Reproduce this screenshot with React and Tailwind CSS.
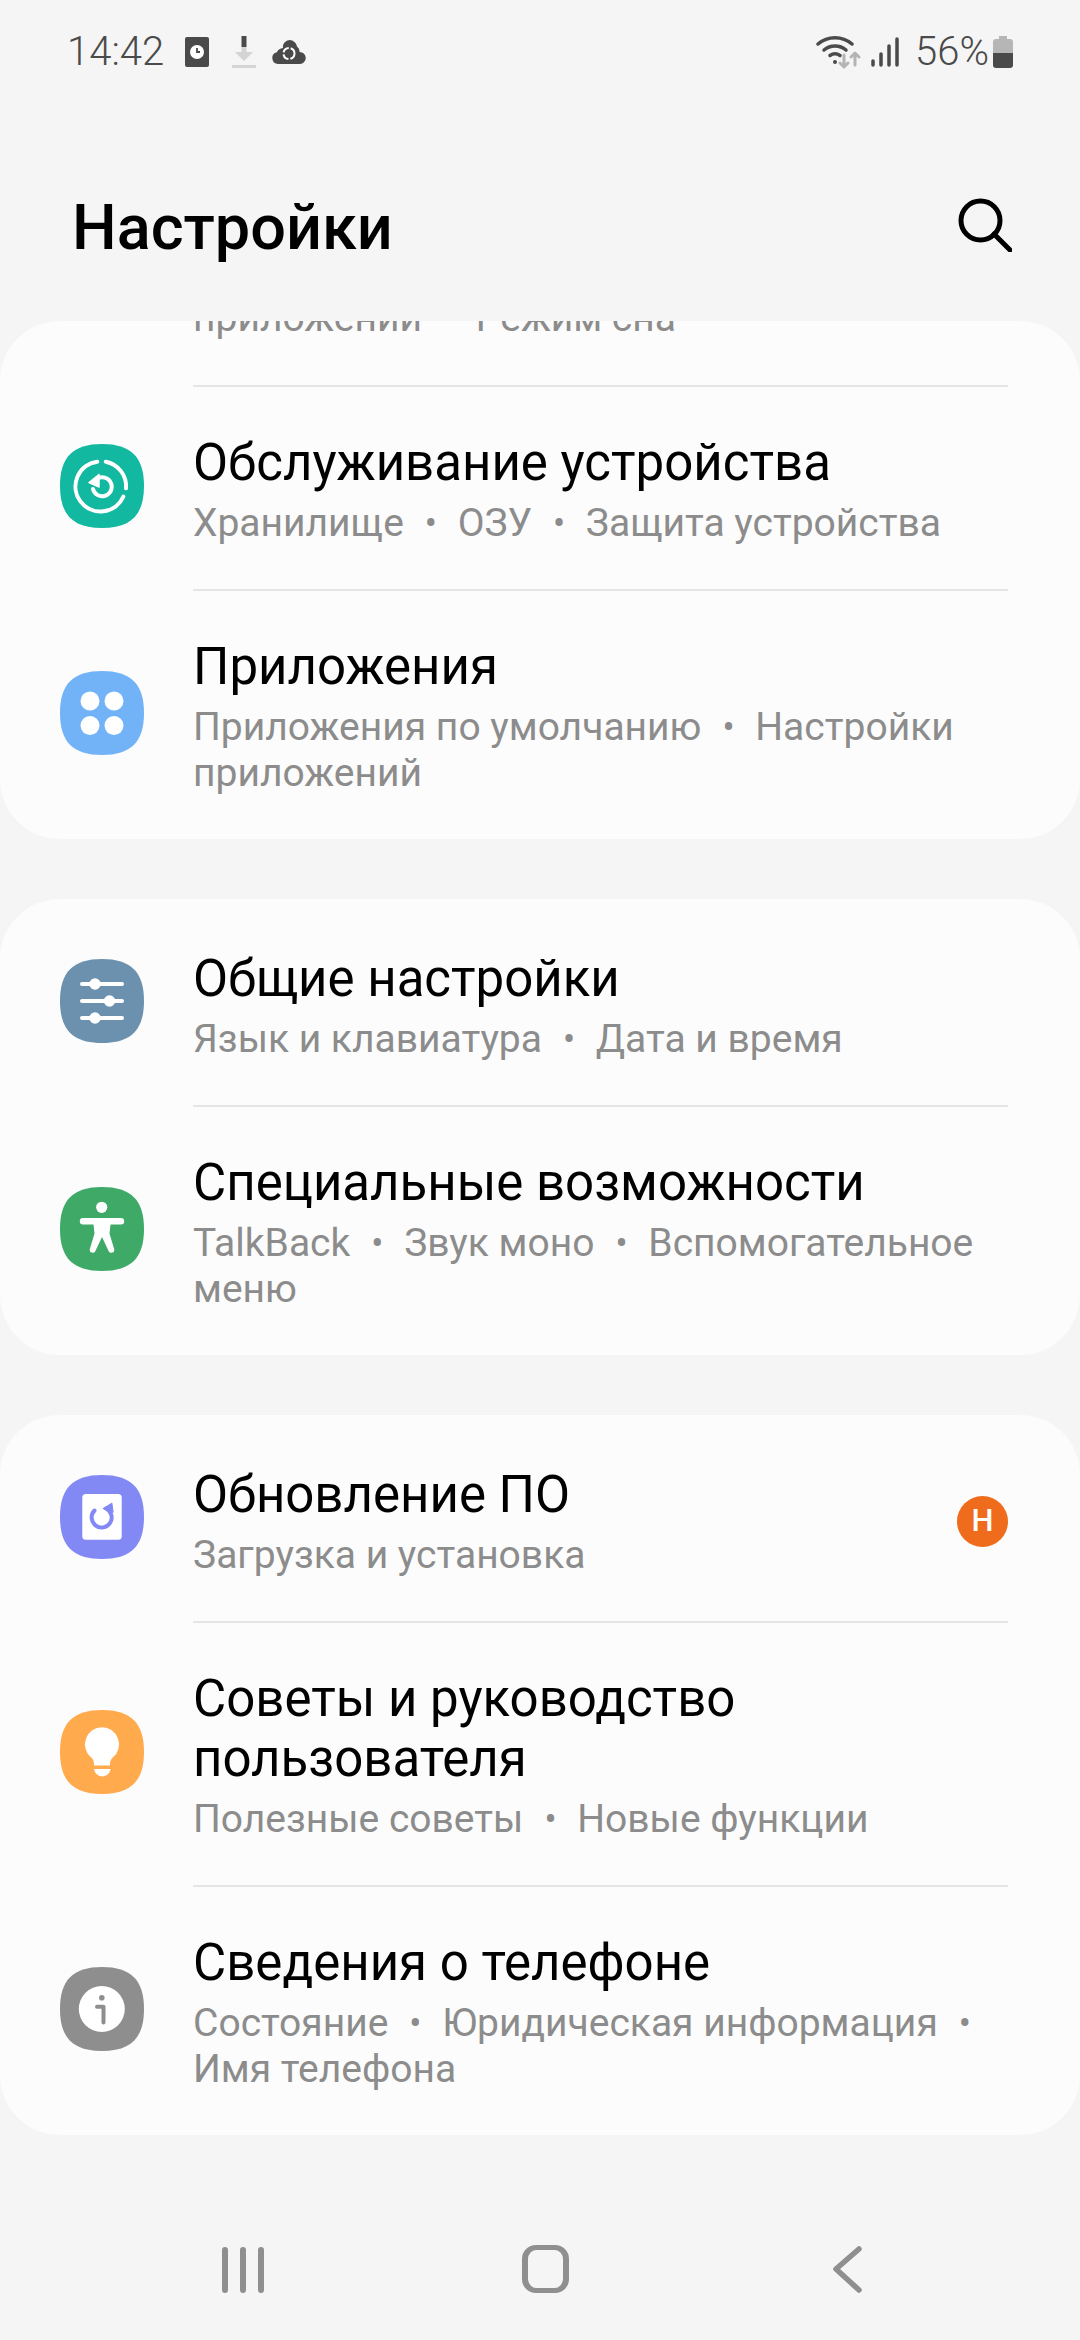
import React from "react";

const SQUIRCLE = "M42 0C71 0 84 13 84 42S71 84 42 84 0 71 0 42 13 0 42 0Z";

function AppIcon({ color, children }) {
	return (
		<svg width="84" height="84" viewBox="0 0 84 84" className="block">
			<path d={SQUIRCLE} fill={color} />
			{children}
		</svg>
	);
}

function MaintenanceIcon() {
	return (
		<AppIcon color="#12b89f">
			<g fill="none" stroke="#fff" strokeWidth="4" strokeLinecap="round">
				<path d="M37.3 17.7A25 25 0 1 0 63.3 52.7" />
				<path d="M45.7 17.7A25 25 0 0 1 66 44.3" />
				<path d="M40 33.5A9.5 9.5 0 1 1 33 45" />
			</g>
			<path d="M29 38.5L39 30.5V43Z" fill="#fff" stroke="#fff" strokeWidth="1.5" strokeLinejoin="round" />
		</AppIcon>
	);
}

function AppsIcon() {
	return (
		<AppIcon color="#72b3f8">
			<g fill="#fff">
				<circle cx="30" cy="30" r="9.5" />
				<circle cx="54" cy="30" r="9.5" />
				<circle cx="30" cy="54.5" r="9.5" />
				<circle cx="54" cy="54.5" r="9.5" />
			</g>
		</AppIcon>
	);
}

function SlidersIcon() {
	return (
		<AppIcon color="#6c91ae">
			<g stroke="#fff" strokeWidth="4" strokeLinecap="round">
				<path d="M22 25H62M22 42H62M22 59H62" />
			</g>
			<g fill="#fff">
				<circle cx="35" cy="25" r="5.7" />
				<circle cx="49.5" cy="42" r="5.7" />
				<circle cx="35" cy="59" r="5.7" />
			</g>
		</AppIcon>
	);
}

function AccessibilityIcon() {
	return (
		<AppIcon color="#3fa968">
			<circle cx="41.7" cy="20.3" r="5.6" fill="#fff" />
			<path
				d="M23 31h38a3.2 3.2 0 010 6.4H50.5l-1 9 4.8 16a3 3 0 01-5.6 1.8L42 50l-6.7 14.2a3 3 0 01-5.6-1.8l4.8-16-1-9H23a3.2 3.2 0 010-6.4z"
				fill="#fff"
			/>
		</AppIcon>
	);
}

function UpdateIcon() {
	return (
		<AppIcon color="#8289f5">
			<rect x="22.3" y="19" width="39.4" height="45.7" rx="3.5" fill="#fff" />
			<path d="M34.5 35.5A10 10 0 1 0 46 33.5" fill="none" stroke="#8289f5" strokeWidth="4" strokeLinecap="round" />
			<path d="M43 33L52.5 29V38Z" fill="#8289f5" stroke="#8289f5" strokeWidth="1" strokeLinejoin="round" transform="rotate(-8 47 33)" />
		</AppIcon>
	);
}

function BulbIcon() {
	return (
		<AppIcon color="#ffaa4d">
			<path
				d="M42 17.3a17 17 0 0 1 11 30c-2 1.8-3 3.6-3 8.2H34c0-4.600-1-6.400-3-8.200a17 17 0 0 1 11-30z"
				fill="#fff"
			/>
			<path d="M34 59h16.600c-.6 4.300-4.200 7.400-8.300 7.400S34.600 63.300 34 59z" fill="#fff" />
		</AppIcon>
	);
}

function InfoIcon() {
	return (
		<AppIcon color="#8e8e8e">
			<circle cx="41.800" cy="42" r="23" fill="#fff" />
			<circle cx="41.800" cy="30.700" r="2.800" fill="#8e8e8e" />
			<path d="M37 39.700H43.500V55.500" fill="none" stroke="#8e8e8e" strokeWidth="4" strokeLinecap="round" strokeLinejoin="round" />
		</AppIcon>
	);
}

function Dot() {
	return <span className="ml-[21px] mr-[11px] text-[36px] leading-none">•</span>;
}

// Subtitle segments are separated by small bullets and wrap like ordinary text
function Subtitle({ parts }) {
	return (
		<p className="text-[39px] leading-[46px] text-[#8c8c8c]">
			{parts.map((part, i) => (
				<React.Fragment key={part}>
					{i > 0 && <Dot />}
					{i > 0 && " "}
					{part}
				</React.Fragment>
			))}
		</p>
	);
}

function SettingsRow({ icon, title, parts, badge, divider = true }) {
	return (
		<div className="flex items-stretch">
			<div className="flex w-[193px] flex-none items-center pb-[3px] pl-[60px]">{icon}</div>
			<div
				className={`mr-[72px] flex min-w-0 flex-1 items-center justify-between border-t-2 pb-[43px] ${
					divider ? "border-[#e6e6e6] pt-[46px]" : "border-transparent pt-[48px]"
				}`}
			>
				<div className="min-w-0 flex-1">
					<h2 className="mb-[7px] text-[51px] leading-[60px] text-black">{title}</h2>
					<Subtitle parts={parts} />
				</div>
				{badge && (
					<div className="flex h-[51px] w-[51px] flex-none items-center justify-center rounded-full bg-[#ee6c1c] text-[31px] font-medium text-white">
						{badge}
					</div>
				)}
			</div>
		</div>
	);
}

function Card({ children }) {
	return <section className="overflow-hidden rounded-[60px] bg-[#fcfcfc]">{children}</section>;
}

function StatusBar() {
	return (
		<div className="flex h-[103px] flex-none items-center justify-between px-[67px] text-[40px] font-light text-[#4a4a4a]">
			<div className="flex items-center">
				<span>14:42</span>
				<svg width="24" height="30" viewBox="0 0 24 30" className="ml-[21px]">
					<rect width="24" height="30" rx="2" fill="#4a4a4a" />
					<circle cx="12" cy="15" r="7" fill="#fff" />
					<path d="M12 11V15H15" fill="none" stroke="#4a4a4a" strokeWidth="1.800" />
				</svg>
				<svg width="24" height="32" viewBox="0 0 24 32" className="ml-[23px]">
					<rect x="9.500" width="5" height="11" fill="#4a4a4a" />
					<path d="M9.500 11H14.500V16H21L12 25 3 16H9.500Z" fill="#d4d4d4" />
					<rect y="29" width="24" height="3" fill="#d4d4d4" />
				</svg>
				<svg width="34" height="24" viewBox="0 0 34 24" className="ml-[16px]">
					<path
						d="M6 24A6 6 0 0 1 4.800 12.200 8 8 0 0 1 11 8 7 7 0 0 1 17.500 0 8.500 8.500 0 0 1 25 6.500 6.500 6.500 0 0 1 27.500 12 6 6 0 0 1 28 24Z"
						fill="#4a4a4a"
					/>
					<circle cx="17" cy="13.500" r="5.500" fill="none" stroke="#fff" strokeWidth="2" strokeDasharray="7 2" />
				</svg>
			</div>
			<div className="flex items-center">
				<svg width="46" height="34" viewBox="0 0 46 34" className="mr-[9px]">
					<g fill="none" stroke="#4a4a4a" strokeWidth="3.500" strokeLinecap="round">
						<path d="M2 9A26 26 0 0 1 36 9" />
						<path d="M8 15A17 17 0 0 1 30 15" />
						<path d="M14 20.500A9 9 0 0 1 24 20.500" />
					</g>
					<circle cx="19" cy="27" r="2" fill="#4a4a4a" />
					<g fill="none" stroke="#b4b4b4" strokeWidth="3" strokeLinecap="round" strokeLinejoin="round">
						<path d="M28 20V32M24 28L28 32 32 28" />
						<path d="M39 30V18M35 22L39 18 43 22" />
					</g>
				</svg>
				<svg width="28" height="30" viewBox="0 0 28 30" className="mr-[16px]">
					<g stroke="#4a4a4a" strokeWidth="3.500" strokeLinecap="round">
						<path d="M2 24V28M10 17V28M18 9V28M26 2V28" />
					</g>
				</svg>
				<span className="mr-[4px]">56%</span>
				<svg width="20" height="32" viewBox="0 0 20 32">
					<path d="M6 0H14V3H17A3 3 0 0 1 20 6V17H0V6A3 3 0 0 1 3 3H6Z" fill="#b6b6b6" />
					<path d="M0 17H20V29A3 3 0 0 1 17 32H3A3 3 0 0 1 0 29Z" fill="#4a4a4a" />
				</svg>
			</div>
		</div>
	);
}

function NavBar() {
	return (
		<div className="flex h-[95px] flex-none items-start pl-[221px]">
			<svg width="44" height="48" viewBox="0 0 44 48" className="mt-[1px]">
				<path d="M4 4V44M22 4V44M40 4V44" stroke="#8f8f8f" strokeWidth="6" strokeLinecap="round" />
			</svg>
			<div className="ml-[257px] h-[48px] w-[47px] rounded-[14px] border-x-[6px] border-y-[5px] border-[#8f8f8f]" />
			<svg width="34" height="48" viewBox="0 0 34 48" className="ml-[261px]">
				<path d="M29 4L6 24 29 45" fill="none" stroke="#8f8f8f" strokeWidth="5.500" strokeLinecap="round" strokeLinejoin="round" />
			</svg>
		</div>
	);
}

export default function App() {
	return (
		<div className="flex h-[2340px] w-[1080px] flex-col overflow-hidden bg-[#f5f5f5] font-['Roboto',sans-serif]">
			<StatusBar />
			<header className="flex h-[218px] flex-none items-start justify-between pl-[72px] pr-[68px] pt-[90px]">
				<h1 className="text-[63px] leading-[70px] font-medium text-black">Настройки</h1>
				<svg width="54" height="54" viewBox="0 0 54 54" className="mt-[5px]">
					<circle cx="22.500" cy="22.500" r="19.500" fill="none" stroke="#000" strokeWidth="5" />
					<path d="M36 36L52 52" stroke="#000" strokeWidth="5" strokeLinecap="round" />
				</svg>
			</header>

			<main className="flex min-h-0 flex-1 flex-col gap-[60px] overflow-hidden">
				<Card>
					{/* list is scrolled: only the tail of the row above is still visible */}
					<div className="flow-root h-[64px] pl-[193px]">
						<div className="-mt-[26px]">
							<Subtitle parts={["приложений", "Режим сна"]} />
						</div>
					</div>
					<SettingsRow
						icon={<MaintenanceIcon />}
						title="Обслуживание устройства"
						parts={["Хранилище", "ОЗУ", "Защита устройства"]}
					/>
					<SettingsRow
						icon={<AppsIcon />}
						title="Приложения"
						parts={["Приложения по умолчанию", "Настройки приложений"]}
					/>
				</Card>
				<Card>
					<SettingsRow
						icon={<SlidersIcon />}
						title="Общие настройки"
						parts={["Язык и клавиатура", "Дата и время"]}
						divider={false}
					/>
					<SettingsRow
						icon={<AccessibilityIcon />}
						title="Специальные возможности"
						parts={["TalkBack", "Звук моно", "Вспомогательное меню"]}
					/>
				</Card>
				<Card>
					<SettingsRow
						icon={<UpdateIcon />}
						title="Обновление ПО"
						parts={["Загрузка и установка"]}
						badge="Н"
						divider={false}
					/>
					<SettingsRow
						icon={<BulbIcon />}
						title="Советы и руководство пользователя"
						parts={["Полезные советы", "Новые функции"]}
					/>
					<SettingsRow
						icon={<InfoIcon />}
						title="Сведения о телефоне"
						parts={["Состояние", "Юридическая информация", "Имя телефона"]}
					/>
				</Card>
			</main>

			<NavBar />
		</div>
	);
}
